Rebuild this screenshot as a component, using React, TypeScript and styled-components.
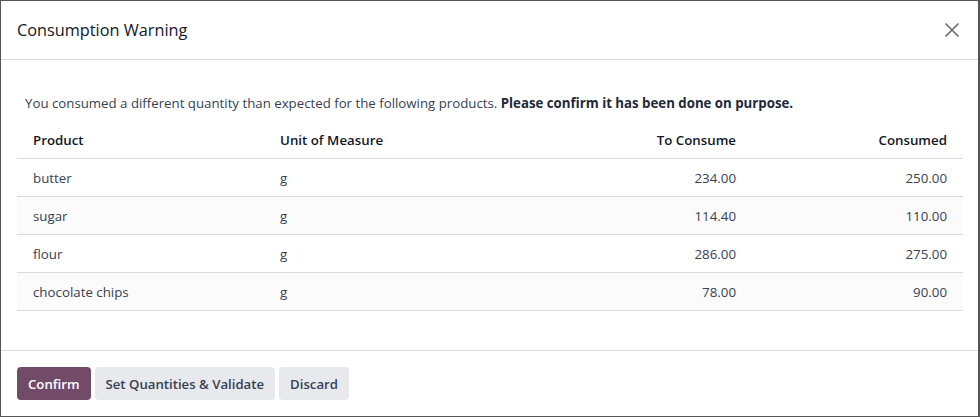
import React from 'react';
import styled, { createGlobalStyle } from 'styled-components';

type Line = {
  product: string;
  uom: string;
  toConsume: string;
  consumed: string;
};

const lines: Line[] = [
  { product: 'butter', uom: 'g', toConsume: '234.00', consumed: '250.00' },
  { product: 'sugar', uom: 'g', toConsume: '114.40', consumed: '110.00' },
  { product: 'flour', uom: 'g', toConsume: '286.00', consumed: '275.00' },
  { product: 'chocolate chips', uom: 'g', toConsume: '78.00', consumed: '90.00' },
];

function App() {
  return (
    <>
      <GlobalStyle />
      <Modal>
        <Header>
          <Title>Consumption Warning</Title>
          <CloseButton aria-label="Close">
            <svg width="16" height="16" viewBox="0 0 16 16">
              <path d="M1.5 1.5 L14.5 14.5 M14.5 1.5 L1.5 14.5" stroke="#6b6b6b" strokeWidth="1.6" fill="none" />
            </svg>
          </CloseButton>
        </Header>
        <Body>
          <Intro>
            You consumed a different quantity than expected for the following products.{' '}
            <strong>Please confirm it has been done on purpose.</strong>
          </Intro>
          <Table>
            <colgroup>
              <col style={{ width: 247 }} />
              <col style={{ width: 247 }} />
              <col style={{ width: 241 }} />
              <col style={{ width: 211 }} />
            </colgroup>
            <thead>
              <tr>
                <Th>Product</Th>
                <Th>Unit of Measure</Th>
                <Th $right>To Consume</Th>
                <Th $right>Consumed</Th>
              </tr>
            </thead>
            <tbody>
              {lines.map((line, i) => (
                <Row key={line.product} $striped={i % 2 === 1}>
                  <Td>{line.product}</Td>
                  <Td>{line.uom}</Td>
                  <Td $right>{line.toConsume}</Td>
                  <Td $right>{line.consumed}</Td>
                </Row>
              ))}
            </tbody>
          </Table>
        </Body>
        <Footer>
          <Button $primary>Confirm</Button>
          <Button>Set Quantities &amp; Validate</Button>
          <Button>Discard</Button>
        </Footer>
      </Modal>
    </>
  );
}

const GlobalStyle = createGlobalStyle`
  html, body {
    margin: 0;
    padding: 0;
    background: #555555;
    height: 417px;
    overflow: hidden;
  }
  body {
    font-family: "Open Sans", "Noto Sans", "Liberation Sans", sans-serif;
    color: #374151;
  }
`;

const Modal = styled.div`
  margin: 1px 2px 1px 1px;
  height: 415px;
  background: #ffffff;
  display: flex;
  flex-direction: column;
  box-sizing: border-box;
`;

const Header = styled.div`
  display: flex;
  align-items: center;
  justify-content: space-between;
  height: 58px;
  padding: 0 16px;
  border-bottom: 1px solid #d8dadd;
  box-sizing: content-box;
`;

const Title = styled.h4`
  margin: 0;
  font-size: 16.3px;
  font-weight: 400;
  color: #111827;
`;

const CloseButton = styled.button`
  border: none;
  background: transparent;
  padding: 0;
  width: 16px;
  height: 16px;
  margin-right: 2px;
  display: flex;
  cursor: pointer;
`;

const Body = styled.div`
  flex: 1;
  padding: 33px 16px 0 16px;
`;

const Intro = styled.p`
  margin: 0 0 8px 8px;
  font-size: 13.25px;
  line-height: 20px;
  color: #374151;

  strong {
    font-weight: 700;
    color: #1f2937;
  }
`;

const Table = styled.table`
  width: 946px;
  border-collapse: collapse;
  table-layout: fixed;
  font-size: 13.3px;
`;

const Th = styled.th<{ $right?: boolean }>`
  height: 37px;
  padding: 0 16px;
  text-align: ${({ $right }) => ($right ? 'right' : 'left')};
  font-weight: 600;
  color: #111827;
  border-bottom: 1px solid #d8dadd;
`;

const Row = styled.tr<{ $striped?: boolean }>`
  background: ${({ $striped }) => ($striped ? '#fbfbfb' : '#ffffff')};
`;

const Td = styled.td<{ $right?: boolean }>`
  height: 37px;
  padding: 0 16px;
  text-align: ${({ $right }) => ($right ? 'right' : 'left')};
  color: #374151;
  border-bottom: 1px solid #d8dadd;
`;

const Footer = styled.div`
  display: flex;
  gap: 4px;
  align-items: center;
  height: 65px;
  padding: 0 16px;
  border-top: 1px solid #d8dadd;
`;

const Button = styled.button<{ $primary?: boolean }>`
  height: 33px;
  padding: 0 11px;
  border: none;
  border-radius: 4px;
  font-family: inherit;
  font-size: 13.2px;
  font-weight: 600;
  background: ${({ $primary }) => ($primary ? '#714b67' : '#e7e9ed')};
  color: ${({ $primary }) => ($primary ? '#ffffff' : '#374151')};
  cursor: pointer;
`;

export default App;
